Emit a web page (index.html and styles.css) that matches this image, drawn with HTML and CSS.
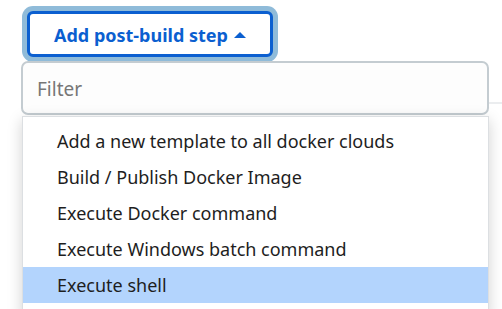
FILE: index.html
```html
<!DOCTYPE html>
<html lang="en">
  <head>
    <meta charset="UTF-8" />
    <title>Add post-build step</title>
    <link rel="stylesheet" href="styles.css">
  </head>
  <body>
    <div class="divider"></div>

    <div class="page">
      <button type="button" class="step-button">
        Add post-build step
        <span class="caret"></span>
      </button>

      <div class="menu-wrap">
        <input type="text" class="filter" placeholder="Filter" />

        <ul class="menu">
          <li>Add a new template to all docker clouds</li>
          <li>Build / Publish Docker Image</li>
          <li>Execute Docker command</li>
          <li>Execute Windows batch command</li>
          <li class="active">Execute shell</li>
        </ul>
      </div>
    </div>
  </body>
</html>
```

FILE: styles.css
```css
* {
  margin: 0;
  padding: 0;
  box-sizing: border-box;
  font-family: "Noto Sans", "Open Sans", Arial, sans-serif;
}

body {
  background-color: #fff;
  color: #222;
  height: 100vh;
  overflow: hidden;
  position: relative;
}

.divider {
  position: absolute;
  top: 102px;
  left: 489px;
  right: 0;
  height: 2px;
  background: #ebedef;
}

.page {
  position: relative;
  display: flex;
  flex-direction: column;
  align-items: flex-start;
  padding: 11px 0 0 21px;
}

.step-button {
  display: flex;
  align-items: center;
  gap: 6px;
  margin-left: 6px;
  width: 246px;
  height: 46px;
  padding: 1px 0 0 24px;
  background: #fff;
  color: #0b5fd0;
  border: 3px solid #0b5fd0;
  border-radius: 6px;
  box-shadow: 0 0 0 5px #8fbbd9;
  font-size: 18px;
  font-weight: 700;
  cursor: pointer;
}

.caret {
  width: 0;
  height: 0;
  border-left: 6.5px solid transparent;
  border-right: 6.5px solid transparent;
  border-bottom: 6px solid #0b5fd0;
}

.menu-wrap {
  margin-top: 4px;
  width: 468px;
}

.filter {
  display: block;
  width: 468px;
  height: 54px;
  padding: 2px 14px 0;
  border: 2px solid #c4ccd1;
  border-radius: 7px;
  background: #fdfdfd;
  font-size: 19px;
  color: #222;
  outline: none;
}

.filter::placeholder {
  color: #777;
}

.menu {
  list-style: none;
  margin: 1px 0 0 1px;
  width: 467px;
  padding: 6px 0 12px;
  background: #fff;
  border: 1px solid #dcdfe2;
  box-shadow: 0 4px 14px rgba(0, 0, 0, 0.18);
}

.menu li {
  height: 36px;
  line-height: 36px;
  padding-left: 34px;
  font-size: 18px;
  color: #1e1e1e;
}

.menu li.active {
  background-color: #b3d4fd;
}
```
